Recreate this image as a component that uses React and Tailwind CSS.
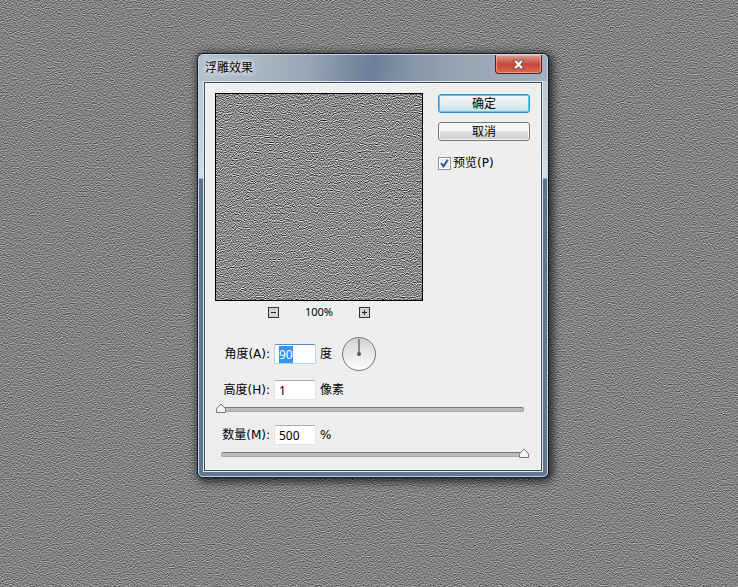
import { useEffect, useId, useRef, useState } from "react";

function EmbossTexture({ className, contrast, brightness, seed, frequency }) {
  const id = useId();
  const offset = brightness - contrast / 2;
  return (
    <svg className={className} aria-hidden="true">
      <filter id={id} x="0" y="0" width="100%" height="100%" colorInterpolationFilters="sRGB">
        <feTurbulence type="fractalNoise" baseFrequency={frequency} numOctaves="3" seed={seed} result="source" />
        <feColorMatrix in="source" values="1 0 0 0 0  1 0 0 0 0  1 0 0 0 0  0 0 0 0 1" result="noise" />
        <feColorMatrix in="source" values="-1 0 0 0 1  -1 0 0 0 1  -1 0 0 0 1  0 0 0 0 1" />
        <feOffset dx="0" dy="1" result="inverted" />
        <feComposite in="noise" in2="inverted" operator="arithmetic" k1="0" k2="0.5" k3="0.5" k4="0" />
        <feColorMatrix
          values={`${contrast} 0 0 0 ${offset}  0 ${contrast} 0 0 ${offset}  0 0 ${contrast} 0 ${offset}  0 0 0 0 1`}
        />
      </filter>
      <rect width="100%" height="100%" filter={`url(#${id})`} />
    </svg>
  );
}

function ZoomButton({ label, plus }) {
  return (
    <button type="button" aria-label={label} className="size-[11px] border border-[#333] bg-[#d4d4d4]">
      <svg viewBox="0 0 9 9" className="block size-[9px]" stroke="#222" shapeRendering="crispEdges">
        <path d={plus ? "M2 4.5h5M4.5 2v5" : "M2 4.5h5"} />
      </svg>
    </button>
  );
}

function NumberField({ id, label, unit, value, onChange, inputRef }) {
  return (
    <div className="flex h-5 items-center font-['DejaVu_Sans','Noto_Sans_CJK_SC',sans-serif]">
      <label htmlFor={id} className="w-[55px] text-right leading-4 whitespace-nowrap">{label}</label>
      <input
        ref={inputRef}
        id={id}
        value={value}
        onChange={(e) => onChange(e.target.value)}
        className="ml-1 h-5 w-[42px] rounded-xs border border-[#e0e4e8] border-t-[#a9acb2] bg-white px-1 font-['Noto_Sans',sans-serif] leading-4 outline-none selection:bg-[#3594f0] selection:text-white focus:border-[#b5d3ee] focus:border-t-[#5b8cc0]"
      />
      <span className="ml-1 leading-4">{unit}</span>
    </div>
  );
}

function Slider({ label, min, max, value, onChange }) {
  const percent = ((Number(value) - min) / (max - min)) * 100;
  return (
    <div className="relative mx-1.5 flex h-3 items-center">
      <div className="h-[5px] w-full rounded-xs border border-[#a5a5a5] border-t-[#777] bg-[#bcbcbc]" />
      <svg
        viewBox="0 0 11 11"
        className="absolute top-0 size-[11px] -translate-x-1/2"
        style={{ left: `${percent}%` }}
      >
        <path d="M5.5 1 10 5.8V9.5H1V5.8Z" fill="#f4f4f4" stroke="#777" strokeLinejoin="round" />
      </svg>
      <input
        type="range"
        aria-label={label}
        min={min}
        max={max}
        value={value}
        onChange={(e) => onChange(e.target.value)}
        className="absolute inset-0 w-full cursor-pointer opacity-0"
      />
    </div>
  );
}

function AngleDial({ angle }) {
  return (
    <svg viewBox="0 0 36 36" className="size-9" role="img" aria-label="角度">
      <defs>
        <linearGradient id="dial" x1="0" y1="0" x2="0" y2="1">
          <stop offset="0" stopColor="#d2d2d2" />
          <stop offset="1" stopColor="#fff" />
        </linearGradient>
      </defs>
      <circle cx="18" cy="18" r="16.5" fill="url(#dial)" stroke="#777" />
      <g transform={`rotate(${90 - Number(angle)} 18 18)`}>
        <path d="M18 18V3" stroke="#666" strokeWidth="1.4" />
      </g>
      <circle cx="18" cy="18" r="2" fill="#555" />
    </svg>
  );
}

export default function App() {
  const [angle, setAngle] = useState("90");
  const [height, setHeight] = useState("1");
  const [amount, setAmount] = useState("500");
  const [preview, setPreview] = useState(true);
  const angleRef = useRef(null);

  useEffect(() => {
    angleRef.current.focus();
    angleRef.current.select();
  }, []);

  return (
    <main className="relative min-h-screen overflow-hidden bg-[#7a7a7a] font-['Noto_Sans','Noto_Sans_CJK_SC',sans-serif] text-xs text-black">
      <EmbossTexture className="absolute inset-0 size-full" contrast={1.05} brightness={0.51} seed="4" frequency="0.57 0.83" />

      <section
        role="dialog"
        aria-labelledby="dialog-title"
        className="absolute top-[53px] left-[197px] w-[352px] rounded-md border border-[#101c2a] bg-[#63788f] shadow-[2px_2px_9px_2px_rgba(0,0,0,0.7)]"
      >
        <div className="rounded-[5px] border border-[#c5d5e3] bg-[linear-gradient(to_bottom,#b9c8d8_0px,#c3cfda_80px,#d5dee6_123px,#5f748b_124px,#63788f_100%)] px-1 pb-1">
          <header className="-mx-1 flex h-[26px] items-start justify-between rounded-t-[4px] bg-[linear-gradient(97deg,#b3c0cd_0%,#abb8c5_15%,#98a6b5_32%,#7c8ea2_42%,#6d7f98_50%,#8494a7_60%,#97a4b2_75%,#a3b0bf_100%)] pr-[5px] pl-1.5">
            <h1 id="dialog-title" className="pt-[5px] leading-4 font-normal [text-shadow:0_0_6px_#fff,0_0_4px_#fff]">浮雕效果</h1>
            <button
              type="button"
              aria-label="关闭"
              className="flex h-[19px] w-[47px] items-center justify-center rounded-b-[4px] border border-t-0 border-[#511c1c] bg-linear-to-b from-[#dca093] via-[#c8483a] via-50% to-[#d9694a] shadow-[inset_0_0_0_1px_rgba(255,210,195,0.5)]"
            >
              <svg viewBox="0 0 12 10" className="h-[11px] w-[13px]">
                <path d="M1 1h3.2L6 3 7.8 1H11L8 5l3 4H7.8L6 7 4.2 9H1l3-4Z" fill="#fff" stroke="#5d4040" strokeWidth=".8" />
              </svg>
            </button>
          </header>

          <div className="border border-[#dce7f0]">
            <div className="border border-[#394b5e] bg-[#eee] pt-2.5 pr-[11px] pb-2.5 pl-2.5 shadow-[inset_0_0_0_1px_#fafafa]">
              <div className="flex items-start justify-between">
                <div className="w-[208px]">
                  <div className="h-[208px] border border-black bg-[#858585]">
                    <EmbossTexture className="block size-full" contrast={1.8} brightness={0.54} seed="11" frequency="0.72 0.87" />
                  </div>
                  <div className="flex h-[23px] items-center justify-between px-[53px] text-[11px]">
                    <ZoomButton label="缩小" />
                    <span>100%</span>
                    <ZoomButton label="放大" plus />
                  </div>
                </div>
                <div className="w-[92px] pt-px">
                  <button
                    type="button"
                    className="flex h-[19px] w-full items-center justify-center rounded-[3px] border border-[#2b8fc8] bg-linear-to-b from-[#f2f6f7] via-[#e3edf0] to-[#cbdfe6] shadow-[inset_0_0_0_1px_#55cdf5]"
                  >
                    确定
                  </button>
                  <button
                    type="button"
                    className="mt-[9px] flex h-[19px] w-full items-center justify-center rounded-[3px] border border-[#747474] bg-linear-to-b from-[#f4f4f4] from-45% via-[#e0e0e0] to-[#cecece] shadow-[inset_0_0_0_1px_#f8f8f8]"
                  >
                    取消
                  </button>
                  <label className="mt-3 flex h-5 items-center gap-0.5 font-['DejaVu_Sans','Noto_Sans_CJK_SC',sans-serif] leading-4">
                    <span className="grid size-[13px] place-items-center border border-[#8e8f8f] bg-[#e8ebf0] shadow-[inset_0_0_0_1px_#fff]">
                      <input
                        type="checkbox"
                        checked={preview}
                        onChange={(e) => setPreview(e.target.checked)}
                        className="peer col-start-1 row-start-1 size-[11px] appearance-none"
                      />
                      <svg viewBox="0 0 11 11" className="pointer-events-none invisible col-start-1 row-start-1 size-[11px] peer-checked:visible">
                        <path d="M2.2 5.2 4.5 8.3 8.8 1.8" fill="none" stroke="#3c4f96" strokeWidth="2" />
                      </svg>
                    </span>
                    预览(P)
                  </label>
                </div>
              </div>

              <div className="mt-3 flex h-9 items-center gap-[9px]">
                <NumberField id="angle" label="角度(A):" unit="度" value={angle} onChange={setAngle} inputRef={angleRef} />
                <AngleDial angle={angle} />
              </div>
              <div className="mt-2">
                <NumberField id="height" label="高度(H):" unit="像素" value={height} onChange={setHeight} />
              </div>
              <div className="mt-[3px]">
                <Slider label="高度" min={1} max={100} value={height} onChange={setHeight} />
              </div>
              <div className="mt-2.5">
                <NumberField id="amount" label="数量(M):" unit="%" value={amount} onChange={setAmount} />
              </div>
              <div className="mt-[3px]">
                <Slider label="数量" min={1} max={500} value={amount} onChange={setAmount} />
              </div>
            </div>
          </div>
        </div>
      </section>
    </main>
  );
}
